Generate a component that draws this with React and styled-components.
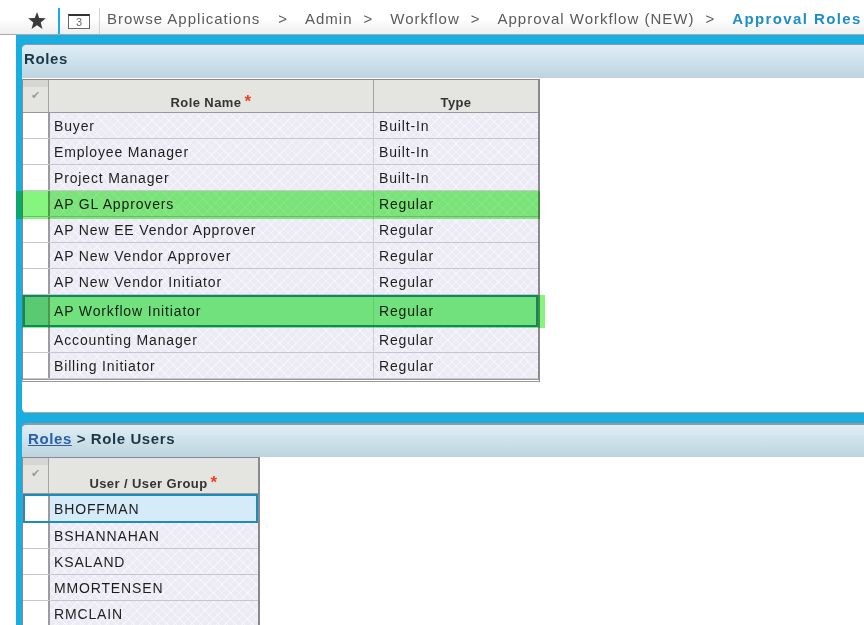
import React from "react";
import styled, { createGlobalStyle } from "styled-components";

const GlobalStyle = createGlobalStyle`
  html, body {
    margin: 0;
    padding: 0;
    background: #fff;
  }
  body {
    font-family: "Liberation Sans", Arial, sans-serif;
  }
`;

const roles = [
  { name: "Buyer", type: "Built-In" },
  { name: "Employee Manager", type: "Built-In" },
  { name: "Project Manager", type: "Built-In" },
  { name: "AP GL Approvers", type: "Regular" },
  { name: "AP New EE Vendor Approver", type: "Regular" },
  { name: "AP New Vendor Approver", type: "Regular" },
  { name: "AP New Vendor Initiator", type: "Regular" },
  { name: "AP Workflow Initiator", type: "Regular", selected: true },
  { name: "Accounting Manager", type: "Regular" },
  { name: "Billing Initiator", type: "Regular" },
];

const users = ["BHOFFMAN", "BSHANNAHAN", "KSALAND", "MMORTENSEN", "RMCLAIN"];

// rows marked up with the green marker
const marks = [
  { left: 16, top: 191, width: 524, height: 28 },
  { left: 22, top: 295, width: 523, height: 33 },
];

const Page = styled.div`
  position: relative;
  width: 864px;
  height: 625px;
  overflow: hidden;
  display: flex;
  flex-direction: column;
`;

const TopBar = styled.div`
  height: 34px;
  flex-shrink: 0;
  display: flex;
  align-items: stretch;
  border-bottom: 1px solid #a9a9a9;
  background: linear-gradient(#ffffff 0%, #ffffff 55%, #eeeeee 100%);
`;

const StarSlot = styled.div`
  width: 58px;
  flex-shrink: 0;
  box-sizing: border-box;
  padding: 6px 0 0 28px;
  display: flex;
  align-items: center;
`;

const BlueDivider = styled.div`
  width: 2px;
  flex-shrink: 0;
  margin-top: 8px;
  background: #1aaee0;
`;

const CalSlot = styled.div`
  width: 40px;
  flex-shrink: 0;
  box-sizing: border-box;
  align-self: flex-end;
  height: 26px;
  padding-left: 8px;
  display: flex;
  align-items: center;
  border-right: 1px solid #d2d2d2;
`;

const CalIcon = styled.div`
  width: 20px;
  height: 12px;
  border: 1px solid #666;
  border-top: 2px solid #333;
  background: #fff;
  color: #666;
  font-size: 11px;
  line-height: 12px;
  text-align: center;
`;

const Crumbs = styled.div`
  display: flex;
  align-items: flex-end;
  padding: 0 0 7px 7px;
  font-size: 15px;
  letter-spacing: 1px;
  color: #5a5a5a;
  white-space: nowrap;
`;

const Sep = styled.span`
  margin: 0 17px 0 ${(p) => (p.$first ? 18 : 11)}px;
`;

const Current = styled.span`
  color: #1b8fc6;
  font-weight: bold;
  letter-spacing: 1.4px;
`;

const Frame = styled.div`
  flex: 1;
  margin-left: 16px;
  padding: 9px 0 0 6px;
  background: #1aaee0;
  display: flex;
  flex-direction: column;
  gap: 10px;
`;

const Panel = styled.div`
  background: #fff;
  border-top: ${(p) => p.$topLine}px solid #8f9a9e;
  border-radius: 5px 0 0 5px;
  overflow: hidden;
  flex-shrink: 0;
`;

const PanelHeader = styled.div`
  height: ${(p) => p.$h}px;
  box-sizing: border-box;
  padding: 5px 0 0 ${(p) => p.$pad}px;
  background: linear-gradient(#deeef6, #bdd4de);
  font-size: 15px;
  font-weight: bold;
  letter-spacing: 0.6px;
  color: #1c3848;
`;

const CrumbLink = styled.a`
  color: #2b5ea8;
  text-decoration: underline;
`;

const PanelBody = styled.div`
  height: ${(p) => (p.$h ? `${p.$h}px` : "auto")};
  padding-top: ${(p) => p.$top}px;
  border-bottom: ${(p) => (p.$h ? "1px solid #a8aaa4" : "none")};
  box-sizing: border-box;
`;

const Grid = styled.div`
  width: ${(p) => p.$w}px;
  box-sizing: border-box;
  border: 1px solid #8a8a8a;
  border-right-width: 2px;
  border-bottom: 3px double #9a9a9a;
  background: #fff;
`;

const HeadRow = styled.div`
  display: flex;
  height: ${(p) => p.$h}px;
  box-sizing: border-box;
  background: #e4e4e0;
  border-bottom: 1px solid #999;
`;

const HeadCheck = styled.div`
  width: 25px;
  flex-shrink: 0;
  box-sizing: border-box;
  padding-top: 9px;
  text-align: center;
  font-family: "DejaVu Sans", sans-serif;
  font-size: 11px;
  color: #9a9a9a;
  background: linear-gradient(#d6d6d2 0 7px, #e4e4e0 7px);
`;

const HeadCell = styled.div`
  width: ${(p) => p.$w}px;
  flex-shrink: 0;
  box-sizing: border-box;
  border-left: 1px solid #a4a4a4;
  display: flex;
  align-items: flex-end;
  justify-content: center;
  padding-bottom: 2px;
`;

const HeadLabel = styled.span`
  font-size: 13px;
  line-height: 15px;
  font-weight: bold;
  letter-spacing: 0.4px;
  color: #333;
  white-space: nowrap;
`;

const Req = styled.span`
  position: relative;
  top: 0;
  margin-left: 3px;
  color: #f0401c;
  font-size: 17px;
  line-height: 0;
`;

const Row = styled.div`
  display: flex;
  height: ${(p) => p.$h}px;
  box-sizing: border-box;
  border-bottom: 1px solid #c6c6ce;
  ${(p) =>
    p.$selected &&
    `
    border: 2px solid #1b8dbd;
    background: #d5ebf9;
  `}
`;

const CheckCell = styled.div`
  width: ${(p) => (p.$selected ? 23 : 25)}px;
  flex-shrink: 0;
  background: ${(p) => p.$fill || "#fff"};
`;

const TextCell = styled.div`
  width: ${(p) => p.$w}px;
  flex-shrink: 0;
  box-sizing: border-box;
  display: flex;
  align-items: center;
  padding-left: ${(p) => (p.$divider ? 4 : 5)}px;
  border-left: ${(p) => (p.$divider ? "2px solid #9c9c9c" : "1px solid #cfcfd6")};
  font-size: 14px;
  letter-spacing: 0.85px;
  color: #1e1e1e;
  white-space: nowrap;
  background-color: ${(p) => (p.$selected ? "transparent" : "#ecebf5")};
  background-image: ${(p) =>
    p.$selected
      ? "none"
      : `repeating-linear-gradient(45deg, rgba(255,255,255,0.4) 0 1px, transparent 1px 6px),
         repeating-linear-gradient(-45deg, rgba(255,255,255,0.4) 0 1px, transparent 1px 6px)`};
`;

const Marker = styled.div`
  position: absolute;
  background: #86f580;
  mix-blend-mode: multiply;
  pointer-events: none;
`;

const Star = () => (
  <svg width="18" height="17" viewBox="0 0 24 23">
    <polygon
      points="12,0 15,8.2 24,8.6 17,14.2 19.4,23 12,18 4.6,23 7,14.2 0,8.6 9,8.2"
      fill="#3a3a3a"
    />
  </svg>
);

const RolesTable = () => (
  <Grid $w={518}>
    <HeadRow $h={33}>
      <HeadCheck>✔</HeadCheck>
      <HeadCell $w={325}>
        <HeadLabel>
          Role Name<Req>*</Req>
        </HeadLabel>
      </HeadCell>
      <HeadCell $w={165}>
        <HeadLabel>Type</HeadLabel>
      </HeadCell>
    </HeadRow>
    {roles.map((r) => (
      <Row key={r.name} $h={r.selected ? 32 : 26} $selected={r.selected}>
        <CheckCell $selected={r.selected} $fill={r.selected ? "#a9d3e4" : null} />
        <TextCell $w={325} $divider $selected={r.selected}>
          {r.name}
        </TextCell>
        <TextCell $w={r.selected ? 163 : 165} $selected={r.selected}>
          {r.type}
        </TextCell>
      </Row>
    ))}
  </Grid>
);

const UsersTable = () => (
  <Grid $w={238}>
    <HeadRow $h={36}>
      <HeadCheck>✔</HeadCheck>
      <HeadCell $w={210}>
        <HeadLabel>
          User / User Group<Req>*</Req>
        </HeadLabel>
      </HeadCell>
    </HeadRow>
    {users.map((u, i) => (
      <Row key={u} $h={i === 0 ? 29 : 26} $selected={i === 0}>
        <CheckCell $selected={i === 0} />
        <TextCell $w={i === 0 ? 208 : 210} $divider $selected={i === 0}>
          {u}
        </TextCell>
      </Row>
    ))}
  </Grid>
);

export default function App() {
  return (
    <>
      <GlobalStyle />
      <Page>
        <TopBar>
          <StarSlot>
            <Star />
          </StarSlot>
          <BlueDivider />
          <CalSlot>
            <CalIcon>3</CalIcon>
          </CalSlot>
          <Crumbs>
            <span>Browse Applications</span>
            <Sep $first>&gt;</Sep>
            <span>Admin</span>
            <Sep>&gt;</Sep>
            <span>Workflow</span>
            <Sep>&gt;</Sep>
            <span>Approval Workflow (NEW)</span>
            <Sep>&gt;</Sep>
            <Current>Approval Roles</Current>
          </Crumbs>
        </TopBar>

        <Frame>
          <Panel $topLine={1}>
            <PanelHeader $h={33} $pad={2}>
              Roles
            </PanelHeader>
            <PanelBody $h={335} $top={1}>
              <RolesTable />
            </PanelBody>
          </Panel>

          <Panel $topLine={2}>
            <PanelHeader $h={32} $pad={6}>
              <CrumbLink>Roles</CrumbLink> &gt; Role Users
            </PanelHeader>
            <PanelBody $top={0}>
              <UsersTable />
            </PanelBody>
          </Panel>
        </Frame>

        {marks.map((m, i) => (
          <Marker
            key={i}
            style={{ left: m.left, top: m.top, width: m.width, height: m.height }}
          />
        ))}
      </Page>
    </>
  );
}
